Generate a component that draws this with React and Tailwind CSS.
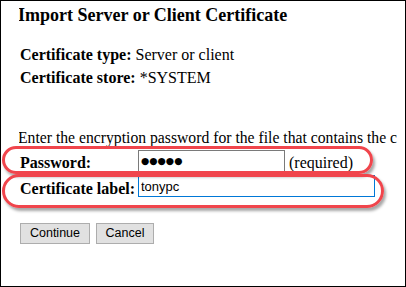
export default function App() {
  return (
    <div
      className="relative w-[406px] h-[287px] bg-white border border-black overflow-hidden text-black"
      style={{ fontFamily: '"Liberation Serif", "Times New Roman", serif' }}
    >
      <div className="ml-[18px] w-[378px] overflow-hidden pt-[3px]">
        {/* header */}
        <h1 className="-ml-px text-[18px] leading-[22px] font-bold whitespace-nowrap">
          Import Server or Client Certificate
        </h1>

        <div className="mt-[17px] pl-px text-[16px] leading-[23px]">
          <p>
            <span className="font-bold">Certificate type:</span> Server or client
          </p>
          <p>
            <span className="font-bold">Certificate store:</span> *SYSTEM
          </p>
        </div>

        <p className="mt-[37px] -ml-px text-[15.7px] leading-[23px] whitespace-nowrap">
          Enter the encryption password for the file that contains the certificate.
        </p>

        {/* form rows */}
        <div className="pl-px text-[16px] leading-[23px]">
          <div className="flex items-center h-[23px]">
            <label className="w-[118px] pt-[3px] font-bold">Password:</label>
            <input
              type="text"
              readOnly
              value="●●●●●"
              className="w-[147px] h-[22px] border border-[#7a7a7a] bg-white pl-[2px] text-[9.5px] outline-none"
              style={{ fontFamily: '"DejaVu Sans", sans-serif' }}
            />
            <span className="ml-[4px] pt-[3px]">(required)</span>
          </div>
          <div className="flex items-center h-[22px] mt-[3px]">
            <label className="w-[118px] pt-[4px] font-bold">Certificate label:</label>
            <input
              type="text"
              readOnly
              value="tonypc"
              className="w-[237px] h-[22px] border border-[#0078d7] bg-white pl-[2px] pt-[1px] text-[13px] outline-none"
              style={{ fontFamily: '"Liberation Sans", Arial, sans-serif' }}
            />
          </div>

          <div
            className="flex gap-[6px] mt-[26px] text-[12.5px]"
            style={{ fontFamily: '"Liberation Sans", Arial, sans-serif' }}
          >
            <button className="w-[70px] h-[21px] bg-[#e1e1e1] border border-[#adadad] leading-none">
              Continue
            </button>
            <button className="w-[58px] h-[21px] bg-[#e1e1e1] border border-[#adadad] leading-none">
              Cancel
            </button>
          </div>
        </div>
      </div>

      {/* red annotation ovals */}
      <div className="absolute left-[1px] top-[145px] w-[371px] h-[28px] rounded-full border-[3px] border-[#f0454c] shadow-[2px_3px_3px_rgba(0,0,0,0.35)] pointer-events-none" />
      <div className="absolute left-[1px] top-[173px] w-[382px] h-[34px] rounded-full border-[3px] border-[#f0454c] shadow-[2px_3px_3px_rgba(0,0,0,0.35)] pointer-events-none" />
    </div>
  );
}
